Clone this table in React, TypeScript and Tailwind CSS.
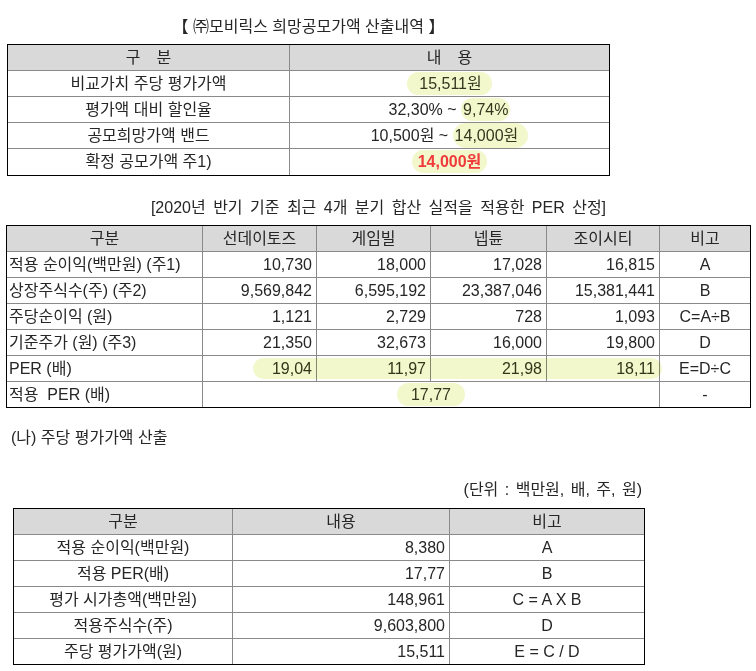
import React from "react";

const cellB = "border-b border-r border-[#8a8a8a]";

function Hl({ children, className = "" }: { children: React.ReactNode; className?: string }) {
  return (
    <span className={`bg-[#f2f8cc] rounded-full text-[#35381f] ${className}`}>{children}</span>
  );
}

export default function App() {
  const rows2: [string, string, string, string, string, string][] = [
    ["적용 순이익(백만원) (주1)", "10,730", "18,000", "17,028", "16,815", "A"],
    ["상장주식수(주) (주2)", "9,569,842", "6,595,192", "23,387,046", "15,381,441", "B"],
    ["주당순이익 (원)", "1,121", "2,729", "728", "1,093", "C=A÷B"],
    ["기준주가 (원) (주3)", "21,350", "32,673", "16,000", "19,800", "D"],
  ];
  const rows3: [string, string, string][] = [
    ["적용 순이익(백만원)", "8,380", "A"],
    ["적용 PER(배)", "17,77", "B"],
    ["평가 시가총액(백만원)", "148,961", "C = A X B"],
    ["적용주식수(주)", "9,603,800", "D"],
    ["주당 평가가액(원)", "15,511", "E = C / D"],
  ];

  return (
    <div className="w-[756px] h-[671px] bg-white text-[16px] leading-[18px] text-[#262626] font-['Liberation_Sans','Noto_Sans_CJK_KR',sans-serif] overflow-hidden">
      {/* Section 1 */}
      <div className="pl-[7px] pt-[18px]">
        <div className="w-[603px] text-center">【 ㈜모비릭스 희망공모가액 산출내역 】</div>
        <div className="mt-[8px] w-[603px] border border-black">
          <table className="w-full table-fixed border-separate border-spacing-0">
            <colgroup>
              <col className="w-[282px]" />
              <col />
            </colgroup>
            <tbody>
              <tr className="h-[26px] bg-[#d9d9d9]">
                <td className={`${cellB} text-center`}>구　분</td>
                <td className="border-b border-[#8a8a8a] text-center">내　용</td>
              </tr>
              <tr className="h-[26px]">
                <td className={`${cellB} text-center`}>비교가치 주당 평가가액</td>
                <td className="border-b border-[#8a8a8a] text-center">
                  <Hl className="pl-[12px] pr-[10px] py-[3px]">15,511원</Hl>
                </td>
              </tr>
              <tr className="h-[26px]">
                <td className={`${cellB} text-center`}>평가액 대비 할인율</td>
                <td className="border-b border-[#8a8a8a] text-center">
                  32,30% ~ <Hl className="pl-[2px] pr-[2px] py-[3px]">9,74%</Hl>
                </td>
              </tr>
              <tr className="h-[26px]">
                <td className={`${cellB} text-center`}>공모희망가액 밴드</td>
                <td className="border-b border-[#8a8a8a] text-center">
                  10,500원 ~ <Hl className="pl-[2px] pr-[10px] py-[4px]">14,000원</Hl>
                </td>
              </tr>
              <tr className="h-[26px]">
                <td className="border-r border-[#8a8a8a] text-center">확정 공모가액 주1)</td>
                <td className="text-center">
                  <span className="bg-[#f2f8cc] rounded-full pl-[6px] pr-[6px] py-[3px] font-bold text-[#f03a3a]">
                    14,000원
                  </span>
                </td>
              </tr>
            </tbody>
          </table>
        </div>
      </div>

      {/* Section 2 */}
      <div className="pl-[6px] mt-[23px]">
        <div className="w-[745px] text-center [word-spacing:3px]">[2020년 반기 기준 최근 4개 분기 합산 실적을 적용한 PER 산정]</div>
        <div className="relative mt-[8px] w-[745px] border border-black">
          <table className="w-full table-fixed border-separate border-spacing-0">
            <colgroup>
              <col className="w-[196px]" />
              <col className="w-[114px]" />
              <col className="w-[114px]" />
              <col className="w-[116px]" />
              <col className="w-[113px]" />
              <col />
            </colgroup>
            <tbody>
              <tr className="h-[26px] bg-[#d9d9d9]">
                <td className={`${cellB} text-center`}>구분</td>
                <td className={`${cellB} text-center`}>선데이토즈</td>
                <td className={`${cellB} text-center`}>게임빌</td>
                <td className={`${cellB} text-center`}>넵튠</td>
                <td className={`${cellB} text-center`}>조이시티</td>
                <td className="border-b border-[#8a8a8a] text-center">비고</td>
              </tr>
              {rows2.map((r) => (
                <tr key={r[0]} className="h-[26px]">
                  <td className={`${cellB} text-left pl-[2px] whitespace-nowrap`}>{r[0]}</td>
                  <td className={`${cellB} text-right pr-[4px]`}>{r[1]}</td>
                  <td className={`${cellB} text-right pr-[4px]`}>{r[2]}</td>
                  <td className={`${cellB} text-right pr-[4px]`}>{r[3]}</td>
                  <td className={`${cellB} text-right pr-[4px]`}>{r[4]}</td>
                  <td className="border-b border-[#8a8a8a] text-center">{r[5]}</td>
                </tr>
              ))}
              <tr className="h-[26px]">
                <td className={`${cellB} text-left pl-[2px]`}>PER (배)</td>
                <td className={`${cellB} text-right pr-[4px] text-[#35381f]`}>19,04</td>
                <td className={`${cellB} text-right pr-[4px] text-[#35381f]`}>11,97</td>
                <td className={`${cellB} text-right pr-[4px] text-[#35381f]`}>21,98</td>
                <td className={`${cellB} text-right pr-[4px] text-[#35381f]`}>18,11</td>
                <td className="border-b border-[#8a8a8a] text-center">E=D÷C</td>
              </tr>
              <tr className="h-[25px]">
                <td className="border-r border-[#8a8a8a] text-left pl-[2px]">{"적용\u00a0 PER (배)"}</td>
                <td colSpan={4} className="border-r border-[#8a8a8a] text-center">
                  <Hl className="px-[14px] py-[3px]">17,77</Hl>
                </td>
                <td className="text-center">-</td>
              </tr>
            </tbody>
          </table>
          <div className="absolute left-[246px] top-[132px] w-[409px] h-[21px] rounded-full bg-[#f2f8cc] mix-blend-multiply pointer-events-none" />
        </div>
      </div>

      {/* Section 3 */}
      <div className="pl-[11px] mt-[21px]">(나) 주당 평가가액 산출</div>
      <div className="pl-[13px] mt-[34px]">
        <div className="w-[632px] text-right pr-[3px] [word-spacing:2px]">(단위 : 백만원, 배, 주, 원)</div>
        <div className="mt-[9px] w-[632px] border border-black">
          <table className="w-full table-fixed border-separate border-spacing-0">
            <colgroup>
              <col className="w-[219px]" />
              <col className="w-[217px]" />
              <col />
            </colgroup>
            <tbody>
              <tr className="h-[26px] bg-[#d9d9d9]">
                <td className={`${cellB} text-center`}>구분</td>
                <td className={`${cellB} text-center`}>내용</td>
                <td className="border-b border-[#8a8a8a] text-center">비고</td>
              </tr>
              {rows3.map((r, i) => {
                const last = i === rows3.length - 1;
                return (
                  <tr key={r[0]} className={last ? "h-[25px]" : "h-[26px]"}>
                    <td className={`${last ? "border-r" : "border-b border-r"} border-[#8a8a8a] text-center`}>{r[0]}</td>
                    <td className={`${last ? "border-r" : "border-b border-r"} border-[#8a8a8a] text-right pr-[4px]`}>{r[1]}</td>
                    <td className={`${last ? "" : "border-b"} border-[#8a8a8a] text-center`}>{r[2]}</td>
                  </tr>
                );
              })}
            </tbody>
          </table>
        </div>
      </div>
    </div>
  );
}
